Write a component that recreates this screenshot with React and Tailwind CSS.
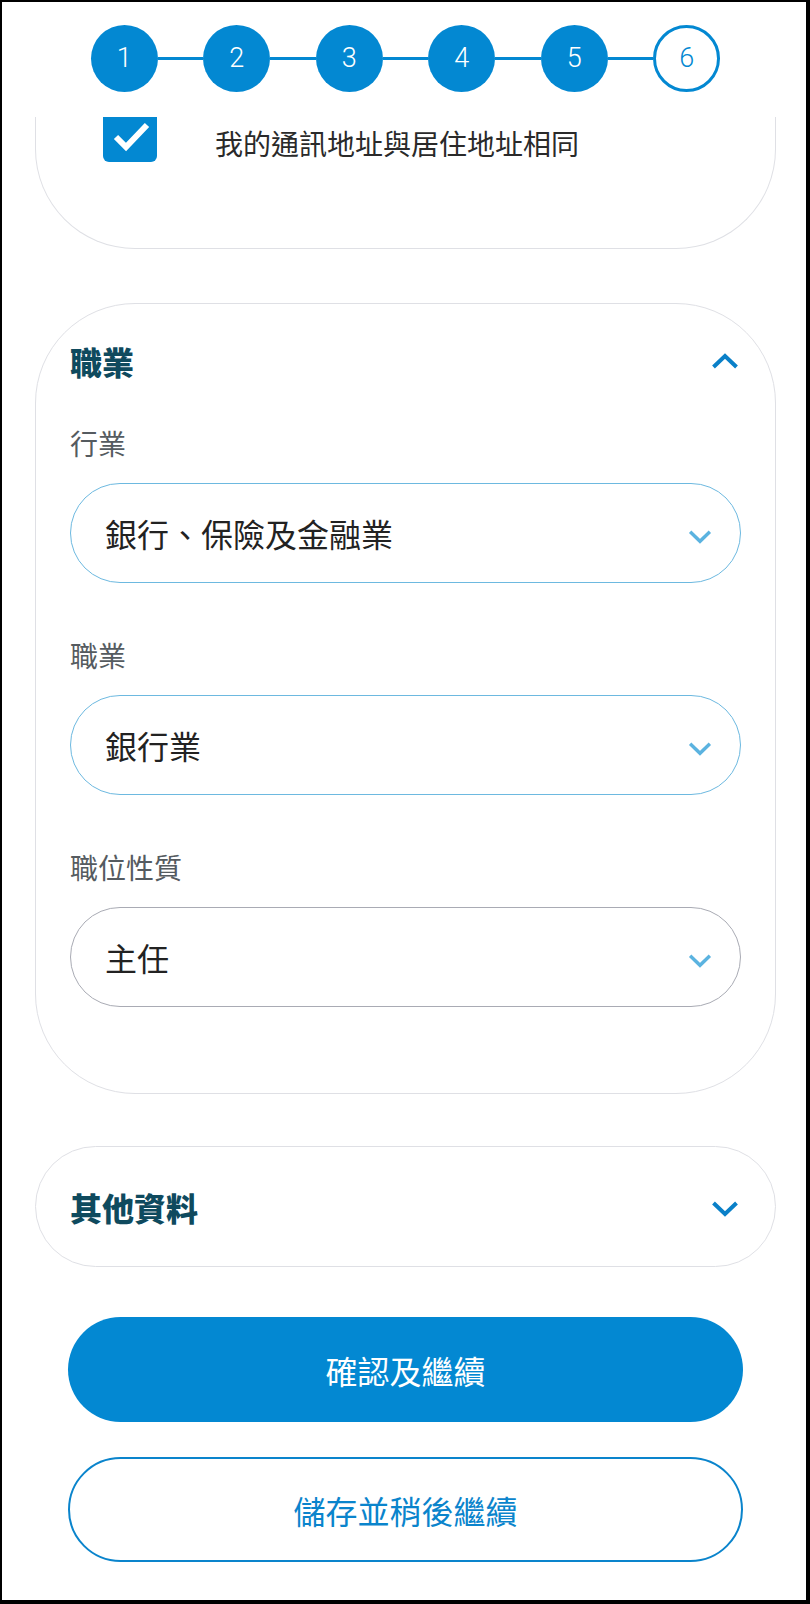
// 申請流程 — 第 6 步「職業」表單畫面（已捲動，頂部步驟列覆蓋住上一張卡片）
import React from 'react';

const FONT = { fontFamily: '"Noto Sans CJK TC", "Noto Sans", sans-serif' };

function Chevron({ up = false, className = '' }) {
  return (
    <svg viewBox="0 0 28 16" className={className} fill="none">
      <path
        d={up ? 'M2.5 14 L14 3 L25.5 14' : 'M2.5 2 L14 13 L25.5 2'}
        stroke="currentColor"
        strokeWidth="4"
      />
    </svg>
  );
}

function Stepper() {
  const steps = [1, 2, 3, 4, 5, 6];
  return (
    <div className="flex items-center justify-center">
      {steps.map((n, i) => (
        <React.Fragment key={n}>
          {i > 0 && <div className="h-[3px] w-[45.5px] bg-[#0388d2]" />}
          {n < 6 ? (
            <div
              className="flex h-[67px] w-[67px] items-center justify-center rounded-full bg-[#0388d2] text-[27px] font-light text-white"
              style={{ fontFamily: 'Roboto, "Liberation Sans", sans-serif' }}
            >
              {n}
            </div>
          ) : (
            <div
              className="flex h-[67px] w-[67px] items-center justify-center rounded-full border-[3px] border-[#0388d2] bg-white text-[27px] font-light text-[#0388d2]"
              style={{ fontFamily: 'Roboto, "Liberation Sans", sans-serif' }}
            >
              {n}
            </div>
          )}
        </React.Fragment>
      ))}
    </div>
  );
}

function SelectField({ label, value, focused = true, className = '' }) {
  return (
    <div className={className}>
      <div className="text-[28px] leading-[36px] text-[#555b60]">{label}</div>
      <div
        className={
          'mt-[22px] flex h-[100px] items-center justify-between rounded-full border-[1.5px] bg-white pl-[34px] pr-[28px] ' +
          (focused ? 'border-[#6db9e0]' : 'border-[#a9abb4]')
        }
      >
        <span className="text-[32px] leading-[40px] text-[#222]">{value}</span>
        <Chevron className="mt-[8px] h-[14px] w-[24px] text-[#5bb3e0]" />
      </div>
    </div>
  );
}

export default function App() {
  return (
    <div
      className="flex h-[1604px] flex-col border-b-4 border-l-2 border-r-4 border-t-2 border-black bg-white pl-[33px] pr-[30px]"
      style={FONT}
    >
      {/* 固定步驟列 */}
      <header className="h-[115px] pt-[23px]">
        <Stepper />
      </header>

      {/* 上一張卡片（地址）— 只露出底部 */}
      <section className="h-[132px] rounded-b-[100px] border-x-[1.5px] border-b-[1.5px] border-[#dfe0e5] pl-[67px]">
        <div className="flex items-start">
          <div className="flex h-[45px] w-[54px] items-start justify-center rounded-b-[6px] bg-[#0388d2]">
            <svg viewBox="0 0 54 45" className="h-[45px] w-[54px]" fill="none">
              <path d="M13 20 L23 30 L44 8" stroke="white" strokeWidth="6" />
            </svg>
          </div>
          <span className="ml-[58px] mt-[7px] text-[28px] leading-[38px] text-[#2a2a2a]">
            我的通訊地址與居住地址相同
          </span>
        </div>
      </section>

      {/* 職業 */}
      <section className="mt-[54px] rounded-[100px] border-[1.5px] border-[#dfe0e5] px-[34px] pb-[86px] pt-[37px]">
        <div className="flex h-[40px] items-center justify-between pr-[2px]">
          <h2 className="text-[32px] font-black leading-[40px] text-[#0f4a5e]">職業</h2>
          <Chevron up className="h-[16px] w-[28px] text-[#0a80c8]" />
        </div>
        <SelectField className="mt-[44px]" label="行業" value="銀行、保險及金融業" />
        <SelectField className="mt-[54px]" label="職業" value="銀行業" />
        <SelectField className="mt-[54px]" label="職位性質" value="主任" focused={false} />
      </section>

      {/* 其他資料 */}
      <section className="mt-[52px] flex h-[121px] items-center justify-between rounded-full border-[1.5px] border-[#dfe0e5] pl-[34px] pr-[36px]">
        <h2 className="text-[32px] font-black leading-[40px] text-[#0f4a5e]">其他資料</h2>
        <Chevron className="mt-[4px] h-[16px] w-[28px] text-[#0a80c8]" />
      </section>

      <div className="mt-[50px] flex flex-col gap-[35px] px-[33px]">
        <button className="h-[105px] rounded-full bg-[#0388d2] text-[32px] text-white">
          確認及繼續
        </button>
        <button className="h-[105px] rounded-full border-2 border-[#0a84cc] bg-white text-[32px] text-[#0a84cc]">
          儲存並稍後繼續
        </button>
      </div>
    </div>
  );
}
